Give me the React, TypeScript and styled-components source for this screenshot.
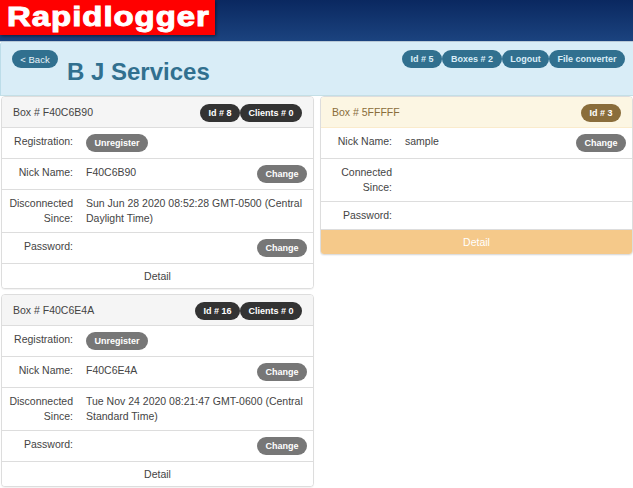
import React from 'react';
import styled, { createGlobalStyle } from 'styled-components';

const GlobalStyle = createGlobalStyle`
  html, body {
    margin: 0;
    padding: 0;
    background: #fff;
    font-family: "Liberation Sans", Arial, sans-serif;
    font-size: 10.5px;
    color: #444;
  }
`;

const Page = styled.div`
  width: 633px;
  height: 488px;
  overflow: hidden;
`;

const TopBar = styled.div`
  height: 41px;
  background: linear-gradient(to bottom, #0a2860 0%, #1b437f 100%);
  border-bottom: 1px solid #b9c9d6;
`;

const Logo = styled.div`
  width: 215px;
  height: 35px;
  background: #ff0000;
  color: #fff;
  font-size: 27px;
  font-weight: 700;
  line-height: 35px;
  padding-left: 7px;
  box-sizing: border-box;
  box-shadow: 1px 1px 3px rgba(0, 0, 0, 0.5);
  overflow: hidden;
  white-space: nowrap;
`;

const LogoText = styled.span`
  display: inline-block;
  letter-spacing: 0.8px;
  transform: scaleX(1.22);
  transform-origin: left center;
  -webkit-text-stroke: 1px #fff;
`;

const Jumbo = styled.div`
  height: 54px;
  background: #d9edf7;
  border-radius: 3px 0 0 0;
  border-left: 1px solid #bcdde9;
  border-bottom: 1px solid #c4dfe6;
  box-sizing: border-box;
  display: flex;
  align-items: flex-start;
  padding: 8px 8px 0 11px;
`;

const Pill = styled.span<{ $bg?: string }>`
  display: inline-flex;
  align-items: center;
  justify-content: center;
  height: 18px;
  padding: 0 8.5px;
  border-radius: 9px;
  background: ${({ $bg }) => $bg || '#31708f'};
  color: #fff;
  font-size: 9px;
  font-weight: 700;
  white-space: nowrap;
`;

const BackPill = styled(Pill)`
  font-weight: 400;
  font-size: 9.5px;
  width: 46px;
  padding: 0;
  color: #e8f3f8;
`;

const Title = styled.h1`
  margin: 8px 0 0 9px;
  font-size: 24px;
  line-height: 27px;
  font-weight: 700;
  color: #31708f;
  flex: 1;
`;

const Nav = styled.div`
  display: flex;
`;

const NavPill = styled(Pill)<{ $w: number }>`
  width: ${({ $w }) => $w}px;
  padding: 0;
  color: #d9edf7;
`;

const Columns = styled.div`
  display: grid;
  grid-template-columns: 313px 313px;
  column-gap: 6px;
  padding-left: 1px;
  align-items: start;
`;

const Stack = styled.div`
  display: flex;
  flex-direction: column;
  gap: 5px;
`;

const Panel = styled.div`
  border: 1px solid #ddd;
  border-radius: 4px;
  background: #fff;
  box-shadow: 0 1px 1px rgba(0, 0, 0, 0.05);
  overflow: hidden;
`;

const Heading = styled.div<{ $warn?: boolean }>`
  display: flex;
  align-items: center;
  justify-content: space-between;
  height: 30px;
  padding: 0 11px;
  background: ${({ $warn }) => ($warn ? '#fcf6e3' : '#f5f5f5')};
  color: ${({ $warn }) => ($warn ? '#8a6d3b' : '#444')};
  border-bottom: 1px solid ${({ $warn }) => ($warn ? '#faebcc' : '#ddd')};
`;

const Badges = styled.div`
  display: flex;
  margin-top: 2px;
`;

const Row = styled.div`
  display: grid;
  grid-template-columns: 71px 1fr auto;
  align-items: start;
  padding: 6px 6px 6px 0;
  border-bottom: 1px solid #ddd;
  line-height: 15px;
`;

const Label = styled.div`
  text-align: right;
`;

const Value = styled.div`
  margin-left: 13px;
`;

const ActionPill = styled(Pill)`
  background: #777;
  vertical-align: top;
`;

const Detail = styled.div<{ $warn?: boolean }>`
  height: 24px;
  line-height: 24px;
  text-align: center;
  color: ${({ $warn }) => ($warn ? '#fff' : '#444')};
  background: ${({ $warn }) => ($warn ? '#f5c98a' : '#fff')};
`;

interface BoxProps {
  name: string;
  id: number;
  since: string;
}

function ClientBox({ name, id, since }: BoxProps) {
  return (
    <Panel>
      <Heading>
        <span>Box # {name}</span>
        <Badges>
          <Pill $bg="#333">Id # {id}</Pill>
          <Pill $bg="#333">Clients # 0</Pill>
        </Badges>
      </Heading>
      <Row>
        <Label>Registration:</Label>
        <Value>
          <ActionPill>Unregister</ActionPill>
        </Value>
      </Row>
      <Row>
        <Label>Nick Name:</Label>
        <Value>{name}</Value>
        <ActionPill>Change</ActionPill>
      </Row>
      <Row>
        <Label>Disconnected Since:</Label>
        <Value>{since}</Value>
      </Row>
      <Row>
        <Label>Password:</Label>
        <Value />
        <ActionPill>Change</ActionPill>
      </Row>
      <Detail>Detail</Detail>
    </Panel>
  );
}

export default function App() {
  return (
    <Page>
      <GlobalStyle />
      <TopBar>
        <Logo>
          <LogoText>Rapidlogger</LogoText>
        </Logo>
      </TopBar>
      <Jumbo>
        <BackPill>&lt; Back</BackPill>
        <Title>B J Services</Title>
        <Nav>
          <NavPill $w={40}>Id # 5</NavPill>
          <NavPill $w={60}>Boxes # 2</NavPill>
          <NavPill $w={47}>Logout</NavPill>
          <NavPill $w={76}>File converter</NavPill>
        </Nav>
      </Jumbo>
      <Columns>
        <Stack>
          <ClientBox
            name="F40C6B90"
            id={8}
            since="Sun Jun 28 2020 08:52:28 GMT-0500 (Central Daylight Time)"
          />
          <ClientBox
            name="F40C6E4A"
            id={16}
            since="Tue Nov 24 2020 08:21:47 GMT-0600 (Central Standard Time)"
          />
        </Stack>
        <Panel>
          <Heading $warn>
            <span>Box # 5FFFFF</span>
            <Badges>
              <Pill $bg="#8a6d3b">Id # 3</Pill>
            </Badges>
          </Heading>
          <Row>
            <Label>Nick Name:</Label>
            <Value>sample</Value>
            <ActionPill>Change</ActionPill>
          </Row>
          <Row>
            <Label>Connected Since:</Label>
            <Value />
          </Row>
          <Row>
            <Label>Password:</Label>
            <Value />
          </Row>
          <Detail $warn>Detail</Detail>
        </Panel>
      </Columns>
    </Page>
  );
}
